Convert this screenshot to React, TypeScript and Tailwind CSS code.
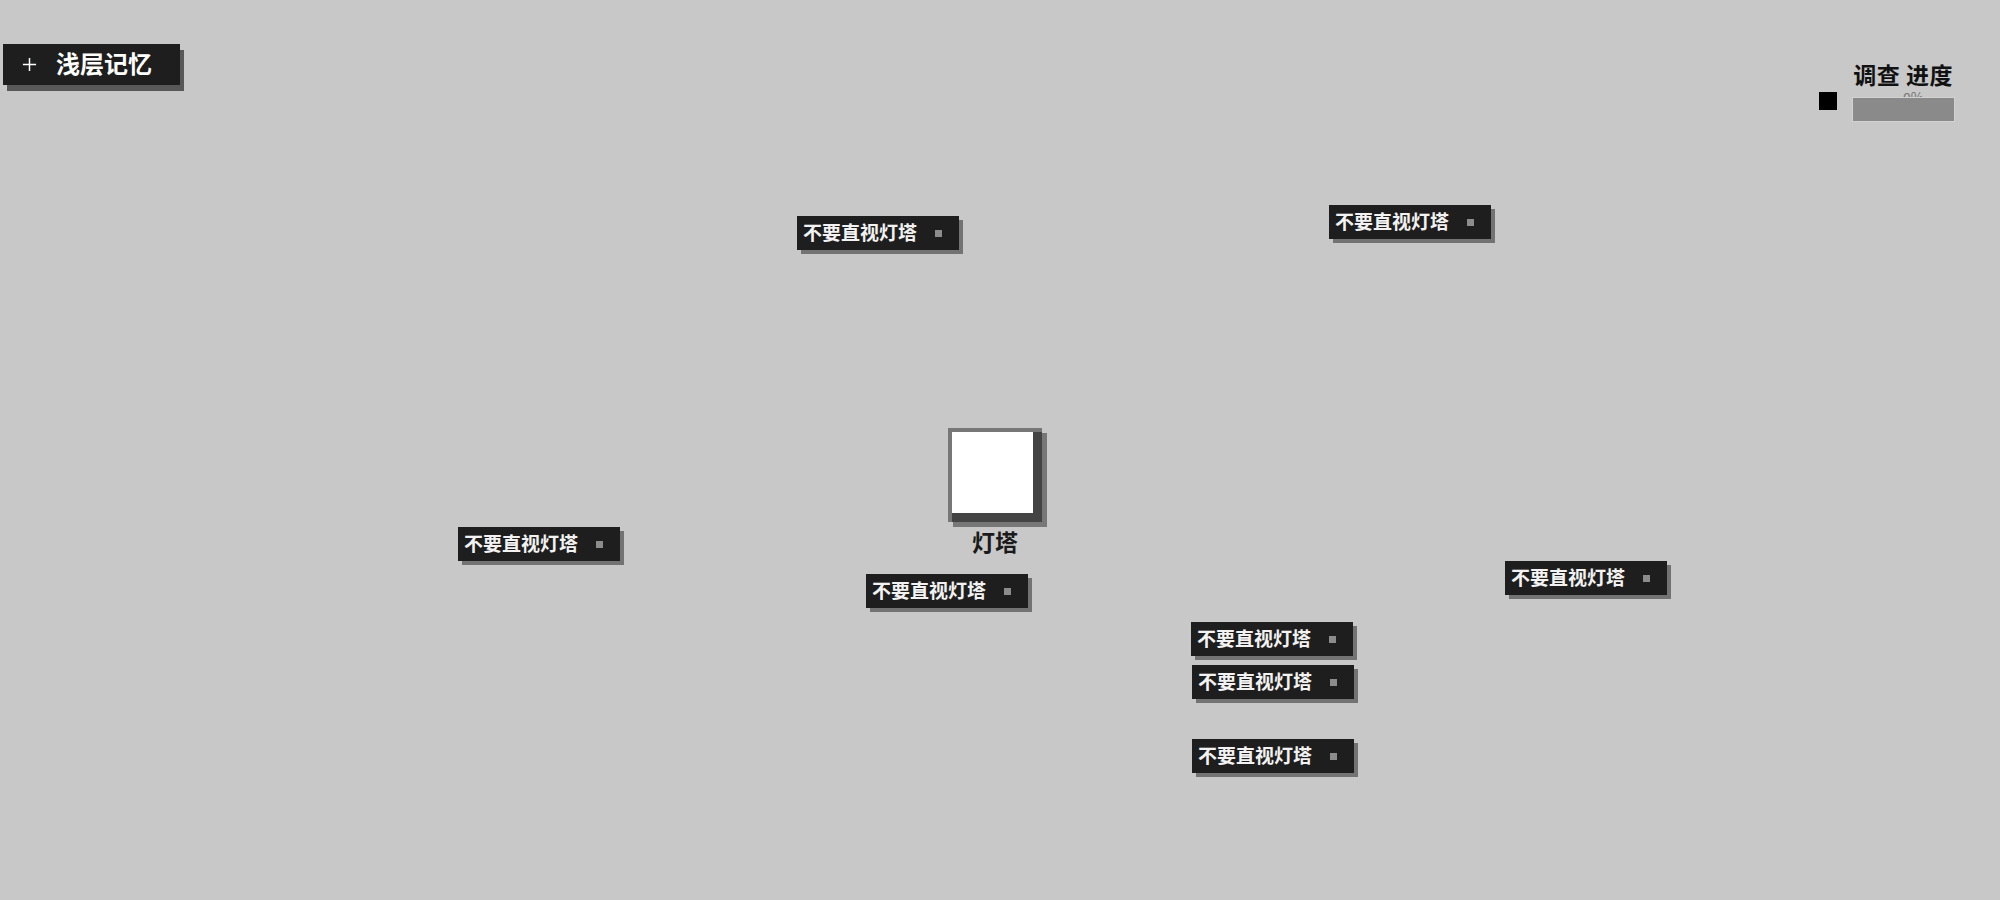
import React from 'react';

type Note = { id: number; x: number; y: number };

// 地图上的提示标签位置
const notes: Note[] = [
    { id: 1, x: 797, y: 216 },
    { id: 2, x: 1329, y: 205 },
    { id: 3, x: 458, y: 527 },
    { id: 4, x: 866, y: 574 },
    { id: 5, x: 1505, y: 561 },
    { id: 6, x: 1191, y: 622 },
    { id: 7, x: 1192, y: 665 },
    { id: 8, x: 1192, y: 739 },
];

const font = { fontFamily: '"Noto Sans CJK SC", "Noto Sans", sans-serif' };

function NoteTag({ x, y }: { x: number; y: number }) {
    return (
        <div
            className="absolute flex items-center w-[162px] h-[34px] bg-[#1e1e1e] shadow-[4px_4px_0_#737373] pl-[6px]"
            style={{ left: x, top: y }}
        >
            <span className="text-[19px] leading-none font-bold text-[#f2f2f2] -mt-[4px]">不要直视灯塔</span>
            <span className="ml-auto mr-[17px] w-[7px] h-[7px] bg-[#8c8c8c]" />
        </div>
    );
}

export default function App() {
    const progress = 0;

    return (
        <div className="relative w-[2000px] h-[900px] bg-[#c8c8c8] overflow-hidden" style={font}>
            <div className="flex justify-between items-start pl-[3px] pr-[46px]">
                <button className="mt-[44px] flex items-center w-[177px] h-[41px] bg-[#1e1e1e] shadow-[4px_6px_0_#585858] text-white">
                    <svg className="ml-[19px]" width="15" height="15" viewBox="0 0 16 16">
                        <path d="M8 1v14M1 8h14" stroke="white" strokeWidth="1.6" />
                    </svg>
                    <span className="ml-[19px] text-[24px] leading-none font-bold -mt-[4px]">浅层记忆</span>
                </button>

                <div className="mt-[59px] flex flex-col items-end">
                    <div className="text-[23px] leading-[30px] font-bold text-[#111] mr-[1px] tracking-[0.5px]">调查 进度</div>
                    <div className="flex items-start gap-[16px] mt-[3px]">
                        <div className="w-[18px] h-[18px] bg-black" />
                        <div className="relative mt-[6px] w-[101px] h-[23px]">
                            <span className="absolute left-[50px] -top-[8px] text-[14px] leading-none text-[#747474]">{progress}%</span>
                            <div className="relative w-full h-full bg-[#8a8a8a] outline outline-1 outline-[#d2d2d2]">
                                <div className="h-full bg-[#444]" style={{ width: `${progress}%` }} />
                            </div>
                        </div>
                    </div>
                </div>
            </div>

            {/* 灯塔 */}
            <div className="absolute left-[948px] top-[428px] flex flex-col items-center">
                <div className="w-[94px] h-[94px] bg-[#444] border-t-4 border-l-4 border-[#777] shadow-[5px_5px_0_#777]">
                    <div className="w-[81px] h-[81px] bg-white" />
                </div>
                <div className="mt-[4px] text-[23px] leading-[30px] font-bold text-[#1a1a1a]">灯塔</div>
            </div>

            {notes.map(n => (
                <NoteTag key={n.id} x={n.x} y={n.y} />
            ))}
        </div>
    );
}
